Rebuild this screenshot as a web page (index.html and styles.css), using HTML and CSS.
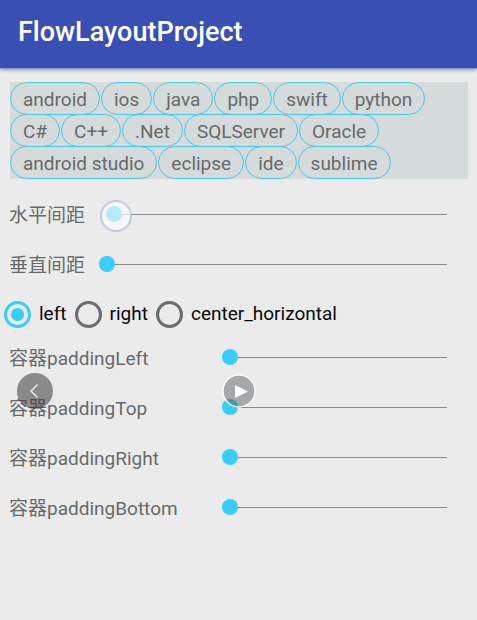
FILE: index.html
```html
<!DOCTYPE html>
<html lang="zh-CN">
<head>
<meta charset="utf-8">
<meta name="viewport" content="width=device-width, initial-scale=1">
<title>FlowLayoutProject</title>
<link rel="stylesheet" href="styles.css">
</head>
<body>
<header class="app-bar"><h1 class="app-title">FlowLayoutProject</h1></header>
<main class="content">
  <ul class="flow">
    <li class="chip">android</li><li class="chip">ios</li><li class="chip">java</li><li class="chip">php</li><li class="chip">swift</li><li class="chip">python</li>
    <li class="row-break"></li>
    <li class="chip">C#</li><li class="chip">C++</li><li class="chip">.Net</li><li class="chip">SQLServer</li><li class="chip">Oracle</li>
    <li class="row-break"></li>
    <li class="chip">android studio</li><li class="chip">eclipse</li><li class="chip">ide</li><li class="chip">sublime</li>
  </ul>
  <div class="sliders">
    <div class="slider-row">
      <label for="h-space">水平间距</label>
      <div class="track"><input id="h-space" type="range" min="0" max="100" value="2"><span class="touch"></span></div>
    </div>
    <div class="slider-row">
      <label for="v-space">垂直间距</label>
      <div class="track"><input id="v-space" type="range" min="0" max="100" value="0"></div>
    </div>
  </div>
  <div class="radios" role="radiogroup" aria-label="gravity">
    <label class="radio"><input type="radio" name="gravity" checked>left</label>
    <label class="radio"><input type="radio" name="gravity">right</label>
    <label class="radio"><input type="radio" name="gravity">center_horizontal</label>
  </div>
  <div class="sliders sliders-wide">
    <div class="slider-row">
      <label for="p-left">容器paddingLeft</label>
      <div class="track"><input id="p-left" type="range" min="0" max="100" value="0"></div>
    </div>
    <div class="slider-row">
      <label for="p-top">容器paddingTop</label>
      <div class="track"><input id="p-top" type="range" min="0" max="100" value="0"></div>
    </div>
    <div class="slider-row">
      <label for="p-right">容器paddingRight</label>
      <div class="track"><input id="p-right" type="range" min="0" max="100" value="0"></div>
    </div>
    <div class="slider-row">
      <label for="p-bottom">容器paddingBottom</label>
      <div class="track"><input id="p-bottom" type="range" min="0" max="100" value="0"></div>
    </div>
  </div>
</main>
<button class="overlay prev" type="button" aria-label="Previous">
  <svg viewBox="0 0 36 36" width="36" height="36"><path d="M20.500 11.500 14 18 20.500 24.500" fill="none" stroke="#f4f4f4" stroke-width="1.3"/></svg>
</button>
<button class="overlay play" type="button" aria-label="Play">
  <svg viewBox="0 0 34 34" width="34" height="34"><circle cx="17" cy="17" r="16" fill="#464b4d" fill-opacity=".42" stroke="#fafafa" stroke-width="1.4"/><path d="M13 11v13l13-6.500z" fill="#fff"/></svg>
</button>
</body>
</html>
```
FILE: styles.css
```css
* {
  box-sizing: border-box;
}

body {
  margin: 0;
  position: relative;
  min-height: 100vh;
  background: #ebebeb;
  color: #686a6a;
  font: 19px/24px Roboto, "Noto Sans CJK SC", sans-serif;
}

.app-bar {
  display: flex;
  align-items: center;
  height: 69px;
  padding: 0 18px 5px;
  background: #3a4fb3;
  border-bottom: 1px solid #8796e0;
  box-shadow: 0 1px 4px rgba(0, 0, 0, .35);
}

.app-title {
  margin: 0;
  color: #fff;
  font-size: 27px;
  line-height: 32px;
  font-weight: 500;
}

.content {
  padding-top: 13px;
}

.flow {
  display: flex;
  flex-wrap: wrap;
  column-gap: 1px;
  margin: 0 9px 0 10px;
  padding: 0 0 1px;
  list-style: none;
  background: #d5dbdb;
}

.chip {
  height: 33px;
  margin-bottom: -1px;
  padding: 5px 12px 3px;
  border: 1px solid #45c8ee;
  border-radius: 17px;
  line-height: 24px;
  white-space: nowrap;
}

.row-break {
  width: 100%;
  height: 0;
}

.sliders {
  display: grid;
  gap: 16px;
  padding: 18px 30px 0 9px;
}

.sliders-wide {
  padding-top: 9px;
}

.slider-row {
  display: grid;
  grid-template-columns: 76px 1fr;
  column-gap: 14px;
  align-items: center;
  height: 34px;
}

.slider-row label {
  padding-top: 3px;
}

.sliders-wide .slider-row {
  grid-template-columns: 199px 1fr;
}

.track {
  position: relative;
  display: flex;
}

input[type="range"] {
  appearance: none;
  width: 100%;
  height: 16px;
  margin: 0;
  background: linear-gradient(#8b8d8d, #8b8d8d) 8px 8px / 100% 1px no-repeat;
}

input[type="range"]::-webkit-slider-thumb {
  appearance: none;
  width: 16px;
  height: 16px;
  border-radius: 50%;
  background: #37cdff;
}

.touch {
  position: absolute;
  left: 1px;
  top: -6px;
  width: 32px;
  height: 32px;
  border: 2px solid #c3c8e2;
  border-radius: 50%;
  background: rgba(255, 255, 255, .62);
  pointer-events: none;
}

.radios {
  display: flex;
  gap: 8px;
  height: 34px;
  margin-top: 16px;
  padding-left: 4px;
}

.radio {
  display: flex;
  align-items: center;
  gap: 8px;
  color: #080808;
}

input[type="radio"] {
  appearance: none;
  width: 27px;
  height: 27px;
  margin: 0;
  border: 3px solid #6b6d6d;
  border-radius: 50%;
}

input[type="radio"]:checked {
  border-color: #37cdff;
  background: radial-gradient(circle, #37cdff 6px, transparent 7px);
}

.overlay {
  position: absolute;
  display: flex;
  padding: 0;
  border: 0;
  border-radius: 50%;
  background: none;
}

.prev {
  left: 17px;
  top: 373px;
  background: rgba(50, 50, 50, .52);
}

.play {
  left: 50%;
  top: 374px;
  margin-left: -17px;
}
```
